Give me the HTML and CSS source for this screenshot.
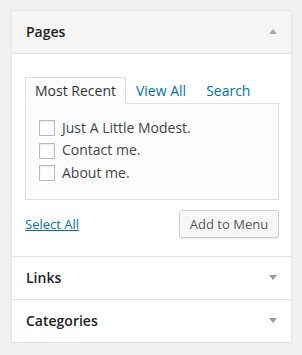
FILE: index.html
```html
<!DOCTYPE html>
<html lang="en">
<head>
	<title>Menu items</title>
	<link rel="stylesheet" href="styles.css">
</head>
<body>
	<div class="menu-panel">
		<div class="section open">
			<h3 class="section-title">Pages <span class="arrow arrow-up"></span></h3>
			<div class="section-body">
				<ul class="tabs">
					<li class="active">Most Recent</li>
					<li><a href="#">View All</a></li>
					<li><a href="#">Search</a></li>
				</ul>
				<div class="tabs-panel">
					<ul class="checklist">
						<li><label><input type="checkbox">Just A Little Modest.</label></li>
						<li><label><input type="checkbox">Contact me.</label></li>
						<li><label><input type="checkbox">About me.</label></li>
					</ul>
				</div>
				<div class="actions">
					<a href="#" class="select-all">Select All</a>
					<button class="button">Add to Menu</button>
				</div>
			</div>
		</div>
		<div class="section">
			<h3 class="section-title">Links <span class="arrow arrow-down"></span></h3>
		</div>
		<div class="section">
			<h3 class="section-title">Categories <span class="arrow arrow-down"></span></h3>
		</div>
	</div>
</body>
</html>
```

FILE: styles.css
```css
* {
	margin: 0;
	padding: 0;
	box-sizing: border-box;
}

body {
	background: #f1f1f1;
	padding: 10px 0 0 11px;
	font-family: "Open Sans", "DejaVu Sans", sans-serif;
	font-size: 13px;
	color: #444;
}

.menu-panel {
	width: 281px;
	background: #fff;
	border: 1px solid #e5e5e5;
	box-shadow: 0 1px 1px rgba(0, 0, 0, .04);
}

.section + .section {
	border-top: 1px solid #e5e5e5;
}

.section-title {
	display: flex;
	justify-content: space-between;
	align-items: center;
	padding: 10px 14px 11px 14px;
	font-size: 14px;
	font-weight: 600;
	line-height: 21px;
	color: #222;
}

.open .section-title {
	background: #f5f5f5;
	border-bottom: 1px solid #e5e5e5;
}

.arrow {
	width: 0;
	height: 0;
	border-left: 4px solid transparent;
	border-right: 4px solid transparent;
}

.arrow-up {
	border-bottom: 5px solid #aaa;
}

.arrow-down {
	border-top: 5px solid #999;
}

.section-body {
	padding: 23px 12px 18px 13px;
}

.tabs {
	list-style: none;
	display: flex;
	font-size: 14px;
	line-height: 18px;
}

.tabs li {
	padding: 4px 9px 3px;
	border: 1px solid transparent;
	margin-bottom: -1px;
	position: relative;
}

.tabs li.active {
	border-color: #ddd;
	border-bottom-color: #fdfdfd;
	background: #fdfdfd;
	color: #333;
}

.tabs a {
	color: #0073aa;
	text-decoration: none;
}

.tabs-panel {
	border: 1px solid #ddd;
	background: #fdfdfd;
	padding: 12.7px 13px 14.3px;
}

.checklist {
	list-style: none;
	font-size: 14px;
	color: #444;
}

.checklist li {
	height: 22.67px;
	line-height: 22.67px;
}

.checklist label {
	display: flex;
	align-items: center;
	height: 100%;
}

.checklist input {
	-webkit-appearance: none;
	appearance: none;
	width: 16px;
	height: 16px;
	margin-right: 7px;
	border: 1px solid #b4b9be;
	background: #fff;
	box-shadow: inset 0 1px 2px rgba(0, 0, 0, .1);
}

.actions {
	display: flex;
	justify-content: space-between;
	align-items: center;
	margin-top: 10px;
}

.select-all {
	color: #0073aa;
	line-height: 18px;
}

.button {
	width: 100px;
	height: 28px;
	line-height: 26px;
	font-family: inherit;
	font-size: 13px;
	color: #555;
	background: #f7f7f7;
	border: 1px solid #ccc;
	border-radius: 3px;
	box-shadow: inset 0 1px 0 #fff, 0 1px 0 rgba(0, 0, 0, .08);
}
```
